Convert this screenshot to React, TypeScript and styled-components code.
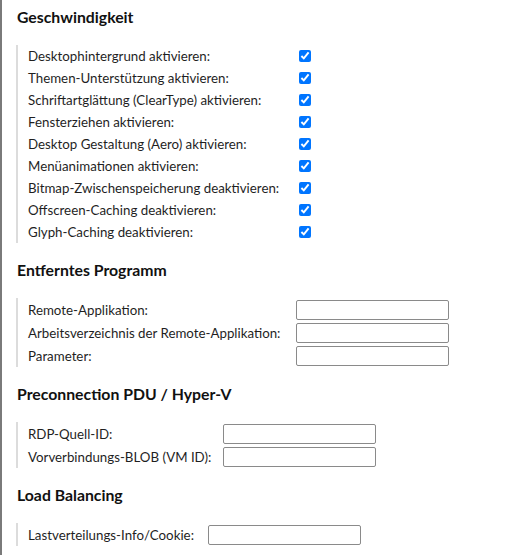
import React from "react";
import styled, { createGlobalStyle } from "styled-components";

const Global = createGlobalStyle`
  html, body { margin: 0; padding: 0; background: #fff; }
  body { font-family: Lato, "Open Sans", "Liberation Sans", sans-serif; color: #1f1f1f; }
`;

const Page = styled.div`
  min-height: 555px;
  box-sizing: border-box;
  border-left: 2px solid #7a7a7a;
  padding: 7px 0 0 14px;
`;

const Section = styled.section`
  & + & { margin-top: 17px; }
`;

const Heading = styled.h2`
  margin: 0 0 0 1px;
  font-size: 15.8px;
  line-height: 20px;
  font-weight: 700;
  color: #111;
`;

const Fields = styled.div<{ $labelWidth: number; $rowHeight: number }>`
  margin-top: 18px;
  border-left: 2px solid #dcdcdc;
  padding-left: 10px;
  display: grid;
  grid-template-columns: ${(p) => p.$labelWidth}px auto;
  grid-auto-rows: ${(p) => p.$rowHeight}px;
  align-items: center;
  justify-content: start;
`;

const Label = styled.label`
  font-size: 13.3px;
  white-space: nowrap;
  color: #1f1f1f;
`;

const Check = styled.input.attrs({ type: "checkbox" })`
  width: 12px;
  height: 12px;
  margin: 0 0 0 3px;
  accent-color: #0075ff;
`;

const TextBox = styled.input.attrs({ type: "text" })`
  box-sizing: border-box;
  width: 153px;
  height: 20px;
  margin: 0;
  border: 1px solid #8a8a8a;
  border-radius: 2px;
  background: #fff;
`;

const speed = [
  "Desktophintergrund aktivieren:",
  "Themen-Unterstützung aktivieren:",
  "Schriftartglättung (ClearType) aktivieren:",
  "Fensterziehen aktivieren:",
  "Desktop Gestaltung (Aero) aktivieren:",
  "Menüanimationen aktivieren:",
  "Bitmap-Zwischenspeicherung deaktivieren:",
  "Offscreen-Caching deaktivieren:",
  "Glyph-Caching deaktivieren:",
];

const remote = [
  "Remote-Applikation:",
  "Arbeitsverzeichnis der Remote-Applikation:",
  "Parameter:",
];

const pdu = ["RDP-Quell-ID:", "Vorverbindungs-BLOB (VM ID):"];

export default function App() {
  return (
    <>
      <Global />
      <Page>
        <Section>
          <Heading>Geschwindigkeit</Heading>
          <Fields $labelWidth={268} $rowHeight={22}>
            {speed.map((t) => (
              <React.Fragment key={t}>
                <Label>{t}</Label>
                <Check defaultChecked />
              </React.Fragment>
            ))}
          </Fields>
        </Section>
        <Section>
          <Heading>Entferntes Programm</Heading>
          <Fields $labelWidth={268} $rowHeight={23}>
            {remote.map((t) => (
              <React.Fragment key={t}>
                <Label>{t}</Label>
                <TextBox />
              </React.Fragment>
            ))}
          </Fields>
        </Section>
        <Section>
          <Heading>Preconnection PDU / Hyper-V</Heading>
          <Fields $labelWidth={195} $rowHeight={23}>
            {pdu.map((t) => (
              <React.Fragment key={t}>
                <Label>{t}</Label>
                <TextBox />
              </React.Fragment>
            ))}
          </Fields>
        </Section>
        <Section>
          <Heading>Load Balancing</Heading>
          <Fields $labelWidth={180} $rowHeight={23}>
            <Label>Lastverteilungs-Info/Cookie:</Label>
            <TextBox />
          </Fields>
        </Section>
      </Page>
    </>
  );
}
